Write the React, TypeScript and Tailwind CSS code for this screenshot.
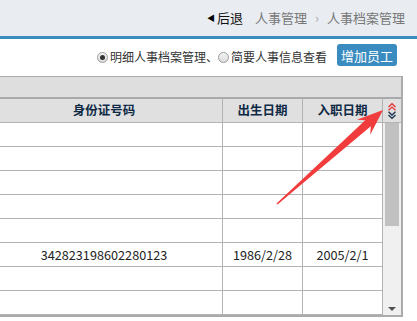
import React from 'react';

const rows = [
  { id: '', birth: '', join: '' },
  { id: '', birth: '', join: '' },
  { id: '', birth: '', join: '' },
  { id: '', birth: '', join: '' },
  { id: '', birth: '', join: '' },
  { id: '342823198602280123', birth: '1986/2/28', join: '2005/2/1' },
  { id: '', birth: '', join: '' },
  { id: '', birth: '', join: '' },
];

const Radio: React.FC<{ checked?: boolean }> = ({ checked }) => (
  <span className="inline-flex items-center justify-center w-[11px] h-[11px] rounded-full border border-[#9a9a9a] bg-gradient-to-b from-[#f4f4f4] to-[#dcdcdc] mr-[2px]">
    {checked && <span className="w-[5px] h-[5px] rounded-full bg-[#333]" />}
  </span>
);

const SortIcon = () => (
  <svg width="12" height="18" viewBox="0 0 12 18" fill="none" strokeWidth="1.4">
    <path d="M2.5 5 L6 1.8 L9.5 5" stroke="#e83838" />
    <path d="M2.5 8.3 L6 5.1 L9.5 8.3" stroke="#e83838" />
    <path d="M2.5 9.8 L6 13 L9.5 9.8" stroke="#1f3550" />
    <path d="M2.5 13 L6 16.2 L9.5 13" stroke="#1f3550" />
  </svg>
);

export default function App() {
  return (
    <div className="relative w-[417px] h-[321px] overflow-hidden bg-white font-['Noto_Sans_CJK_SC','Noto_Sans',sans-serif] text-[12px]">
      {/* breadcrumb bar */}
      <div className="h-[36px] bg-[#e9edf2] flex items-center justify-end pr-[12px] text-[13px]">
        <span className="text-[8px] text-black mr-[2px]">◀</span>
        <span className="text-[#111]">后退</span>
        <span className="ml-[12px] text-[#777]">人事管理</span>
        <span className="mx-[8px] text-[#aaa]">›</span>
        <span className="text-[#777]">人事档案管理</span>
      </div>
      <div className="h-[3px] bg-[#3b8dbd]" />

      {/* toolbar */}
      <div className="h-[37px] flex items-start justify-end pr-[20px] pt-[5px]">
        <label className="flex items-center h-[22px] text-[#333] mt-[2px]">
          <Radio checked />
          <span>明细人事档案管理、</span>
          <Radio />
          <span>简要人事信息查看</span>
        </label>
        <button className="ml-[10px] w-[60px] h-[22px] rounded-[3px] bg-[#3a8cc0] text-white text-[13px] leading-none">
          增加员工
        </button>
      </div>

      {/* grid panel */}
      <div className="w-[403px] border-t border-r-2 border-b-2 border-[#ababab]">
        <div className="h-[22px] bg-[#dedede] border-b-2 border-[#a9a9a9]" />
        <div className="flex">
          <div className="w-[383px]">
            <div className="flex h-[24px] bg-[#e0e0e0] border-b border-[#b3b3b3] font-bold text-[#0f2a45] text-[12.5px]">
              <div className="w-[223px] border-r border-[#b3b3b3] flex items-center justify-center pr-[14px]">身份证号码</div>
              <div className="w-[80px] border-r border-[#b3b3b3] flex items-center justify-center">出生日期</div>
              <div className="w-[80px] border-r border-[#b3b3b3] flex items-center justify-center">入职日期</div>
            </div>
            {rows.map((r, i) => (
              <div key={i} className="flex h-[24px] border-b border-[#b3b3b3] text-[#222] text-[12.7px]">
                <div className="w-[223px] border-r border-[#b3b3b3] flex items-center justify-center pr-[14px]">{r.id}</div>
                <div className="w-[80px] border-r border-[#b3b3b3] flex items-center justify-center">{r.birth}</div>
                <div className="w-[80px] border-r border-[#b3b3b3] flex items-center justify-center">{r.join}</div>
              </div>
            ))}
          </div>
          <div className="w-[18px] flex flex-col">
            <div className="h-[24px] bg-[#e0e0e0] border-b border-[#b3b3b3] flex items-center justify-center">
              <SortIcon />
            </div>
            <div className="flex-1 bg-[#f0f0f0] flex flex-col items-center pb-[4px]">
              <div className="w-[14px] h-[103px] bg-[#c1c1c1]" />
              <div className="flex-1" />
              <div className="w-0 h-0 border-l-[4px] border-r-[4px] border-t-[4px] border-l-transparent border-r-transparent border-t-[#505050]" />
            </div>
          </div>
        </div>
      </div>

      {/* annotation arrow */}
      <svg className="absolute inset-0 pointer-events-none" width="417" height="321">
        <polygon
          points="276.5,203.5 365.2,120.2 356.9,119.8 383,110 370.2,134.7 370.8,126.3 277.5,204.5"
          fill="#f03c3c"
        />
      </svg>
    </div>
  );
}
